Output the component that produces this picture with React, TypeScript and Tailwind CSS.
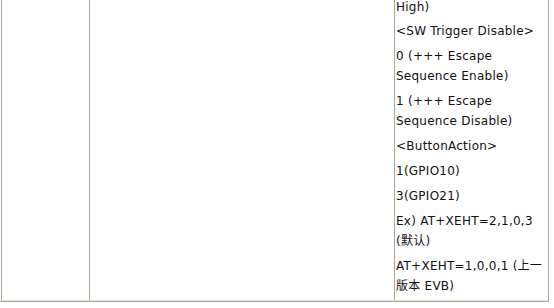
import React from "react";

const lines: string[] = [
  "High)",
  "<SW Trigger Disable>",
  "0 (+++ Escape Sequence Enable)",
  "1 (+++ Escape Sequence Disable)",
  "<ButtonAction>",
  "1(GPIO10)",
  "3(GPIO21)",
  "Ex) AT+XEHT=2,1,0,3 (默认)",
  "AT+XEHT=1,0,0,1 (上一版本 EVB)",
];

export default function App() {
  return (
    <div className="w-[554px] h-[308px] bg-white overflow-hidden">
      <div className="flex w-[549px] h-[302px] border-b border-r border-[#aca899]">
        <div className="ml-[1px] w-[88px] border-l border-b border-l-[#aca899] border-b-[#e4e2da]" />
        <div className="w-[305px] border-l border-b border-l-[#aca899] border-b-[#e4e2da]" />
        <div className="flex-1 border-l border-b border-l-[#aca899] border-b-[#e4e2da] overflow-hidden">
          <div
            className="mt-[-3.5px] pl-[1px] pr-[1px] flex flex-col gap-[4.875px] text-[12px] leading-[20px] tracking-[0.25px] text-[#111]"
            style={{ fontFamily: '"DejaVu Sans", Verdana, "Noto Sans CJK SC", sans-serif' }}
          >
            {lines.map((t, i) => (
              <p key={i}>{t}</p>
            ))}
          </div>
        </div>
      </div>
    </div>
  );
}
